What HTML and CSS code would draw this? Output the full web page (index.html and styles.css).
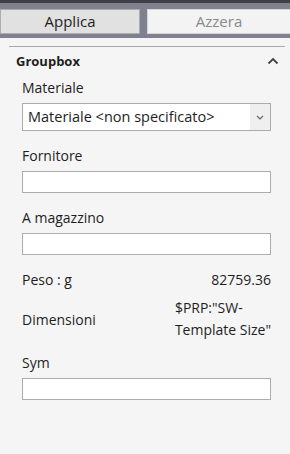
FILE: index.html
```html
<!DOCTYPE html>
<html>
<head>
<meta charset="utf-8">
<link rel="stylesheet" href="styles.css">
</head>
<body>
<div class="toolbar">
  <button class="btn btn-apply">Applica</button>
  <button class="btn btn-reset">Azzera</button>
</div>
<div class="panel">
  <div class="group-head">
    <span class="group-title">Groupbox</span>
    <svg class="chev" width="12" height="8" viewBox="0 0 12 8"><path d="M1.5 6.5 L6 2 L10.5 6.5" fill="none" stroke="#444" stroke-width="1.8"/></svg>
  </div>
  <div class="fields">
    <div class="field">
      <div class="label">Materiale</div>
      <div class="select">
        <span class="select-text">Materiale &lt;non specificato&gt;</span>
        <span class="select-btn"><svg width="8" height="5" viewBox="0 0 8 5"><path d="M1 1 L4 4 L7 1" fill="none" stroke="#666" stroke-width="1.2"/></svg></span>
      </div>
    </div>
    <div class="field">
      <div class="label">Fornitore</div>
      <div class="input"></div>
    </div>
    <div class="field">
      <div class="label">A magazzino</div>
      <div class="input"></div>
    </div>
    <div class="row row-peso">
      <span>Peso : g</span>
      <span>82759.36</span>
    </div>
    <div class="row row-dim">
      <span class="dim-label">Dimensioni</span>
      <span class="dim-val">$PRP:"SW-<br>Template Size"</span>
    </div>
    <div class="field">
      <div class="label">Sym</div>
      <div class="input"></div>
    </div>
  </div>
</div>
</body>
</html>
```
FILE: styles.css
```css
html, body {
  margin: 0;
  padding: 0;
}
body {
  width: 290px;
  height: 454px;
  background: #f5f5f5;
  font-family: "Open Sans", "Noto Sans", sans-serif;
  font-size: 14px;
  color: #1e1e1e;
  overflow: hidden;
}
.toolbar {
  background: #7f828e;
  border-top: 3px solid #3f4049;
  padding: 6px 0 4px 0;
  display: grid;
  grid-template-columns: 140px 143px;
  column-gap: 7px;
}
.btn {
  height: 25px;
  margin: 0;
  padding: 0;
  font-family: inherit;
  font-size: 15px;
  line-height: 23px;
}
.btn-apply {
  background: #e1e1e1;
  border: 1px solid #adadad;
  color: #1e1e1e;
}
.btn-reset {
  background: #f3f3f3;
  border: 1px solid #d6d6d6;
  border-right: none;
  color: #8a8a8a;
}
.panel {
  padding: 8px 0 0 0;
}
.group-head {
  margin-left: 9px;
  margin-right: 5px;
  border-top: 1px solid #a8a8a8;
  display: flex;
  justify-content: space-between;
  align-items: center;
  padding: 4px 6px 0 7px;
  height: 20px;
}
.group-title {
  font-weight: bold;
  font-size: 13px;
}
.chev {
  display: block;
}
.fields {
  padding: 7px 19px 0 22px;
  display: flex;
  flex-direction: column;
}
.field {
  display: flex;
  flex-direction: column;
}
.label {
  height: 20px;
  line-height: 20px;
  margin-bottom: 5px;
}
.select {
  height: 26px;
  border: 1px solid #acacac;
  background: #fff;
  display: flex;
  align-items: stretch;
  margin-bottom: 15px;
}
.select-text {
  flex: 1;
  padding-left: 5px;
  line-height: 26px;
  font-size: 14.5px;
}
.select-btn {
  width: 20px;
  background: #efefef;
  display: flex;
  align-items: center;
  justify-content: center;
}
.input {
  height: 20px;
  border: 1px solid #acacac;
  background: #fff;
  margin-bottom: 15px;
}
.row {
  display: flex;
  justify-content: space-between;
}
.row-peso {
  line-height: 20px;
  margin-bottom: 7px;
}
.row-dim {
  align-items: center;
  margin-bottom: 12px;
}
.dim-label {
  padding-top: 1px;
}
.dim-val {
  line-height: 22px;
}
```
